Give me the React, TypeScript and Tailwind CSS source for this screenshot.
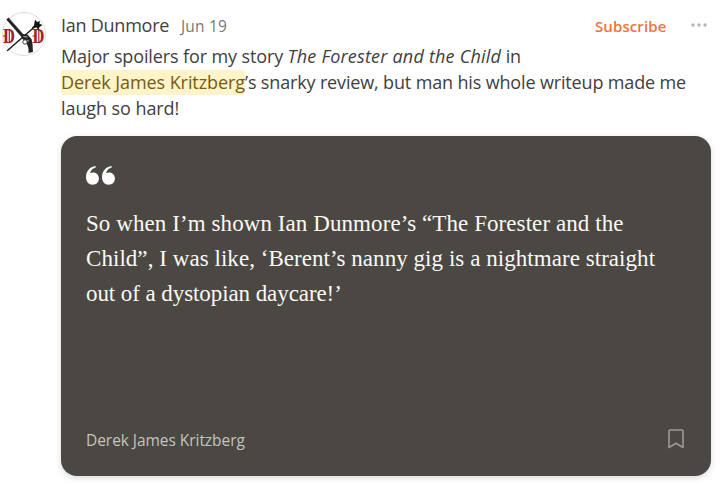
import type { ReactNode } from 'react';

const quoteLines = [
  { text: 'So when I’m shown Ian Dunmore’s “The Forester and the', tracking: 'tracking-[0.08px]' },
  { text: 'Child”, I was like, ‘Berent’s nanny gig is a nightmare straight', tracking: 'tracking-[0.05px]' },
  { text: 'out of a dystopian daycare!’', tracking: 'tracking-[-0.08px]' },
];

function Avatar() {
  return (
    <svg className="block h-11 w-12 overflow-visible" viewBox="0 0 48 44">
      <circle cx="22" cy="22" r="21.500" fill="#fff" stroke="#dedede" strokeWidth="1" />
      <g fill="#a51f24" fontFamily="Liberation Serif, serif" fontWeight="700" fontSize="22">
        <text x="1" y="31" textLength="12" lengthAdjust="spacingAndGlyphs">D</text>
        <text x="30.500" y="31" textLength="12" lengthAdjust="spacingAndGlyphs">D</text>
      </g>
      <path d="M7.300 17v13M36.800 17v13M1 24h4M30.500 24h4" stroke="#a51f24" strokeWidth="1.200" />
      <path d="M5.500 38.500 37 11" stroke="#171717" strokeWidth="1.400" strokeLinecap="round" />
      <path d="m33 7.500 2 2.500 3-1-1 2.500 3.500 1.500-3 2-1 3-2-2.500-5 .5 2.500-2.500Z" fill="#171717" />
      <path d="M5.500 6.500 22 25.500" stroke="#222" strokeWidth="3.200" />
      <path d="M7 6.500 22 23" stroke="#999" strokeWidth="0.600" />
      <path d="m20 22 5.500.5 4 4.500c1.500 4 1 9 1.500 13l-4.500 1c.5-4-.5-8-3-11l-4-4Z" fill="#252525" />
      <circle cx="23" cy="30" r="2.200" fill="#fff" stroke="#333" strokeWidth="0.900" />
      <path d="m21.500 24.500 4 .5M25 28l2 1.500" stroke="#aaa" strokeWidth="1" />
    </svg>
  );
}

function QuoteMark() {
  return (
    <svg className="block h-[19px] w-[29px]" viewBox="0 0 29 19" fill="#fff">
      <path d="M9.500 0C3.800.8 0 5.300 0 11.300 0 15.700 2.700 18.800 6.700 18.800c3.700 0 6.200-2.700 6.200-6.200 0-3.400-2.500-6-5.900-6-1.100 0-2.100.2-3 .7C4.700 4.500 6.800 2.300 9.900 1.300Z" />
      <path transform="translate(16 0)" d="M9.500 0C3.800.8 0 5.300 0 11.300 0 15.700 2.700 18.800 6.700 18.800c3.700 0 6.200-2.700 6.200-6.200 0-3.400-2.500-6-5.900-6-1.100 0-2.100.2-3 .7C4.700 4.500 6.800 2.300 9.900 1.300Z" />
    </svg>
  );
}

function Mention({ children }: { children: ReactNode }) {
  return (
    <a className="rounded-[3px] bg-[#fff3ca] pb-px tracking-[-0.08px] text-[#735c0f]">{children}</a>
  );
}

export default function App() {
  return (
    <div className="flex h-[484px] w-[722px] overflow-hidden bg-white pl-[2px] pt-3 font-['Open_Sans',sans-serif] text-[#404040]">
      <div className="w-[59px] shrink-0">
        <Avatar />
      </div>
      <div className="w-[650px]">
        <div className="flex h-[31px] items-start justify-between whitespace-nowrap">
          <div className="flex items-baseline leading-[27px]">
            <span className="w-[120px] text-[18px] tracking-[-0.25px]">Ian Dunmore</span>
            <span className="text-[15.5px] tracking-[0.2px] text-[#777]">Jun 19</span>
          </div>
          <div className="flex">
            <span className="w-24 text-[15px] font-semibold leading-[29px] tracking-[0.1px] text-[#f37338]">Subscribe</span>
            <svg className="mr-1 mt-[11px] h-1 w-4" viewBox="0 0 16 4" fill="#b5b5b5">
              <circle cx="2" cy="2" r="1.700" />
              <circle cx="8" cy="2" r="1.700" />
              <circle cx="14" cy="2" r="1.700" />
            </svg>
          </div>
        </div>
        <p className="whitespace-nowrap text-[18px] leading-[26px]">
          <span className="block tracking-[-0.12px]">
            Major spoilers for my story <em className="tracking-[0.2px]">The Forester and the Child</em> in
          </span>
          <span className="block tracking-[-0.15px]">
            <Mention>Derek James Kritzberg</Mention>’s snarky review, but man his whole writeup made me
          </span>
          <span className="block tracking-[-0.08px]">laugh so hard!</span>
        </p>
        <div className="mt-[15px] flex h-[340px] flex-col rounded-2xl bg-[#4b4843] pb-[23px] pl-[25px] pr-[27px] pt-[30px] shadow-[0_2px_6px_rgba(0,0,0,0.15)]">
          <QuoteMark />
          <blockquote className="mt-[21px] whitespace-nowrap font-['Liberation_Serif',serif] text-[23px] leading-[35px] text-[#faf9f7]">
            {quoteLines.map((line) => (
              <span key={line.text} className={`block ${line.tracking}`}>{line.text}</span>
            ))}
          </blockquote>
          <div className="mt-auto flex h-6 items-center justify-between">
            <span className="text-[15.5px] tracking-[-0.05px] text-[#c5c3be]">Derek James Kritzberg</span>
            <svg className="mb-1 h-5 w-4" viewBox="0 0 16 20" fill="none" stroke="#9d9a95" strokeWidth="1.600" strokeLinejoin="round">
              <path d="M1 2.200Q1 1 2.200 1h11.600Q15 1 15 2.200V18.500L8 14.200 1 18.500Z" />
            </svg>
          </div>
        </div>
      </div>
    </div>
  );
}
